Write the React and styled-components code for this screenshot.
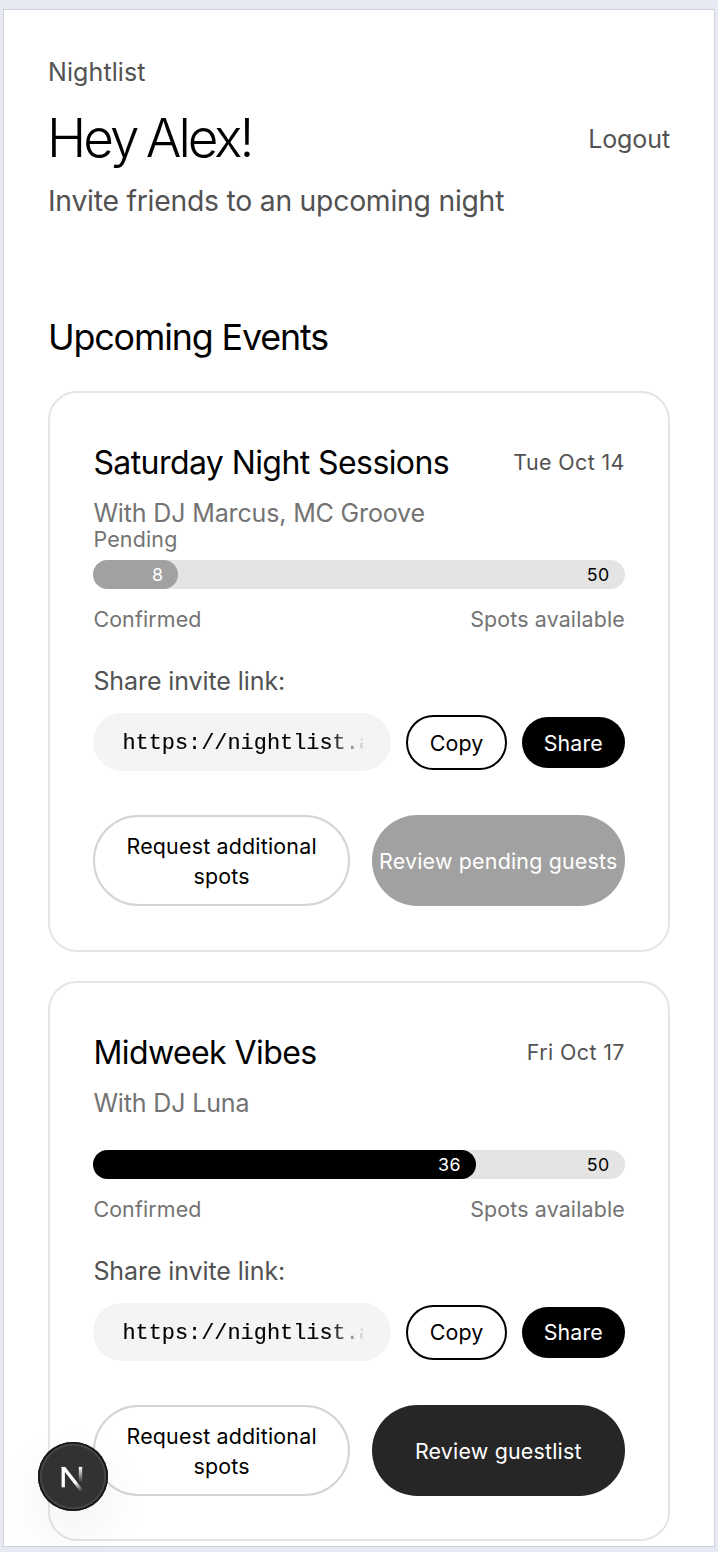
import React from "react";
import styled, { createGlobalStyle } from "styled-components";

const GlobalStyle = createGlobalStyle`
  *, *::before, *::after { box-sizing: border-box; }
  body {
    margin: 0;
    background: #e7eaf2;
    font-family: Inter, "Liberation Sans", sans-serif;
    color: #000;
  }
  h1, h2, h3, p { margin: 0; font-weight: 400; }
  button { font-family: inherit; cursor: pointer; }
`;

const Page = styled.div`
  height: 1552px;
  padding: 9px 3px 5px;
  overflow: hidden;
`;

const Screen = styled.main`
  height: 1538px;
  padding: 44px 44px 0;
  background: #fff;
  border: 1px solid #cfd1d9;
  overflow: hidden;
`;

const Brand = styled.p`
  font-size: 25px;
  line-height: 36px;
  letter-spacing: 0.1px;
  color: #525252;
`;

const HeadingRow = styled.div`
  display: flex;
  align-items: center;
  justify-content: space-between;
  height: 66px;
  margin-top: 15px;
`;

const Greeting = styled.h1`
  margin-left: -1px;
  font-size: 53px;
  font-weight: 300;
  line-height: 66px;
  letter-spacing: -3px;
  word-spacing: -2.6px;
`;

const Logout = styled.button`
  padding: 2px 0 0;
  border: 0;
  background: none;
  font-size: 25px;
  line-height: 36px;
  letter-spacing: -0.1px;
  color: #525252;
`;

const Tagline = styled.p`
  margin-top: 8px;
  font-size: 28.3px;
  line-height: 44px;
  letter-spacing: -0.23px;
  color: #525252;
`;

const SectionTitle = styled.h2`
  margin-top: 89px;
  font-size: 35.8px;
  line-height: 50px;
  letter-spacing: -1.13px;
`;

const EventList = styled.section`
  display: flex;
  flex-direction: column;
  gap: 29.3px;
  margin-top: 29px;
`;

const Card = styled.article`
  height: 560.5px;
  padding: 46px 43.2px 43px 43.4px;
  border: 2px solid #e5e5e5;
  border-radius: 29px;
`;

const CardHeader = styled.header`
  display: flex;
  align-items: center;
  justify-content: space-between;
`;

const EventName = styled.h3`
  font-size: 32px;
  line-height: 47px;
  letter-spacing: -0.58px;
`;

const EventDate = styled.time`
  padding-bottom: 1.2px;
  font-size: 21.4px;
  line-height: 30px;
  letter-spacing: 0.4px;
  color: #525252;
`;

const Lineup = styled.p`
  margin-top: 9px;
  font-size: 25px;
  line-height: 36px;
  letter-spacing: -0.15px;
  color: #737373;
`;

const PendingLabel = styled.p`
  height: 29.3px;
  font-size: 21.4px;
  line-height: 16px;
  letter-spacing: 0.2px;
  color: #737373;
`;

const Track = styled.div`
  display: flex;
  align-items: center;
  justify-content: space-between;
  height: 29px;
  padding-right: 15px;
  border-radius: 15px;
  background: #e4e4e4;
  font-size: 17.8px;
  letter-spacing: 0.5px;
`;

const Fill = styled.div`
  flex: none;
  height: 29px;
  padding-right: 15px;
  border-radius: 15px;
  background: ${(p) => (p.$pending ? "#a1a1a1" : "#000")};
  color: #fff;
  line-height: 29px;
  text-align: right;
`;

const Legend = styled.div`
  display: flex;
  justify-content: space-between;
  margin-top: 15px;
  font-size: 21.4px;
  line-height: 30px;
  letter-spacing: 0.14px;
  color: #737373;
`;

const ShareLabel = styled.p`
  margin-top: 29px;
  font-size: 25px;
  line-height: 36px;
  letter-spacing: -0.09px;
  color: #525252;
`;

const ShareRow = styled.div`
  display: flex;
  align-items: center;
  gap: 14.5px;
  margin-top: 14px;
`;

const LinkField = styled.div`
  flex: 1;
  min-width: 0;
  height: 58px;
  padding: 0 28px 0 29px;
  border-radius: 29px;
  background: #f4f4f4;
`;

const LinkText = styled.div`
  overflow: hidden;
  white-space: nowrap;
  font-family: "Liberation Mono", monospace;
  font-size: 21.9px;
  line-height: 62px;
  -webkit-text-stroke: 0.15px currentColor;
  mask-image: linear-gradient(to right, #000 86%, rgba(0, 0, 0, 0.1) 100%);
`;

const PillButton = styled.button`
  width: ${(p) => (p.$solid ? 103 : 101.5)}px;
  height: ${(p) => (p.$solid ? 51 : 55)}px;
  padding: 0.6px 0 0;
  border: ${(p) => (p.$solid ? "0" : "2px solid #000")};
  border-radius: 28px;
  background: ${(p) => (p.$solid ? "#000" : "#fff")};
  color: ${(p) => (p.$solid ? "#fff" : "#000")};
  font-size: 21.4px;
  letter-spacing: 0.15px;
`;

const Actions = styled.div`
  display: flex;
  justify-content: space-between;
  margin-top: 44px;
`;

const actionTones = {
  outline: { bg: "#fff", fg: "#000", border: "2px solid #d4d4d4" },
  muted: { bg: "#a1a1a1", fg: "#fff", border: "0" },
  dark: { bg: "#262626", fg: "#fff", border: "0" },
};

const ActionButton = styled.button`
  width: ${(p) => (p.$tone === "outline" ? 256.5 : 253)}px;
  height: 91px;
  padding: ${(p) => (p.$tone === "outline" ? "0 28px" : "0")};
  border: ${(p) => actionTones[p.$tone].border};
  border-radius: 46px;
  background: ${(p) => actionTones[p.$tone].bg};
  color: ${(p) => actionTones[p.$tone].fg};
  font-size: 21.4px;
  line-height: 30px;
  letter-spacing: 0.2px;
  white-space: ${(p) => (p.$tone === "outline" ? "normal" : "nowrap")};
`;

const DevBadge = styled.div`
  position: fixed;
  left: 38.4px;
  top: 1442.2px;
  width: 69.2px;
  height: 69.2px;
  border-radius: 50%;
  background: #323232;
  box-shadow:
    inset 0 0 0 1.8px #171717,
    inset 0 0 0 3.6px #484848,
    0 22px 58px -6px rgba(0, 0, 0, 0.09);

  svg { display: block; width: 100%; height: 100%; }
`;

const NextMark = () => (
  <svg viewBox="0 0 69.2 69.2" aria-hidden="true">
    <rect x="23.6" y="24.9" width="3.3" height="20.4" fill="#fff" />
    <path d="M23.6 24.9 H27.3 L45.4 48.2 L42.7 50.3 L23.6 25.8 Z" fill="url(#nextDiagonal)" />
    <rect x="40.8" y="24.9" width="3.4" height="16" fill="url(#nextStem)" />
    <defs>
      <linearGradient id="nextDiagonal" x1="37.2" y1="40.4" x2="44" y2="49" gradientUnits="userSpaceOnUse">
        <stop stopColor="white" />
        <stop offset="1" stopColor="white" stopOpacity="0" />
      </linearGradient>
      <linearGradient id="nextStem" x1="42.5" y1="24.9" x2="42.5" y2="40.5" gradientUnits="userSpaceOnUse">
        <stop stopColor="white" />
        <stop offset="1" stopColor="white" stopOpacity="0" />
      </linearGradient>
    </defs>
  </svg>
);

const events = [
  {
    name: "Saturday Night Sessions",
    date: "Tue Oct 14",
    lineup: "With DJ Marcus, MC Groove",
    count: 8,
    spots: 50,
    pending: true,
  },
  {
    name: "Midweek Vibes",
    date: "Fri Oct 17",
    lineup: "With DJ Luna",
    count: 36,
    spots: 50,
    pending: false,
  },
];

const EventCard = ({ event }) => (
  <Card>
    <CardHeader>
      <EventName>{event.name}</EventName>
      <EventDate>{event.date}</EventDate>
    </CardHeader>
    <Lineup>{event.lineup}</Lineup>
    <PendingLabel>{event.pending ? "Pending" : null}</PendingLabel>
    <Track>
      <Fill
        $pending={event.pending}
        style={{ width: `calc((100% + 15px) * ${event.count / event.spots})` }}
      >
        {event.count}
      </Fill>
      <span>{event.spots}</span>
    </Track>
    <Legend>
      <span>Confirmed</span>
      <span>Spots available</span>
    </Legend>
    <ShareLabel>Share invite link:</ShareLabel>
    <ShareRow>
      <LinkField>
        <LinkText>https://nightlist.app</LinkText>
      </LinkField>
      <PillButton>Copy</PillButton>
      <PillButton $solid>Share</PillButton>
    </ShareRow>
    <Actions>
      <ActionButton $tone="outline">Request additional spots</ActionButton>
      <ActionButton $tone={event.pending ? "muted" : "dark"}>
        {event.pending ? "Review pending guests" : "Review guestlist"}
      </ActionButton>
    </Actions>
  </Card>
);

export default function App() {
  return (
    <>
      <GlobalStyle />
      <Page>
        <Screen>
          <Brand>Nightlist</Brand>
          <HeadingRow>
            <Greeting>Hey Alex!</Greeting>
            <Logout>Logout</Logout>
          </HeadingRow>
          <Tagline>Invite friends to an upcoming night</Tagline>
          <SectionTitle>Upcoming Events</SectionTitle>
          <EventList>
            {events.map((event) => (
              <EventCard key={event.name} event={event} />
            ))}
          </EventList>
        </Screen>
        <DevBadge>
          <NextMark />
        </DevBadge>
      </Page>
    </>
  );
}
